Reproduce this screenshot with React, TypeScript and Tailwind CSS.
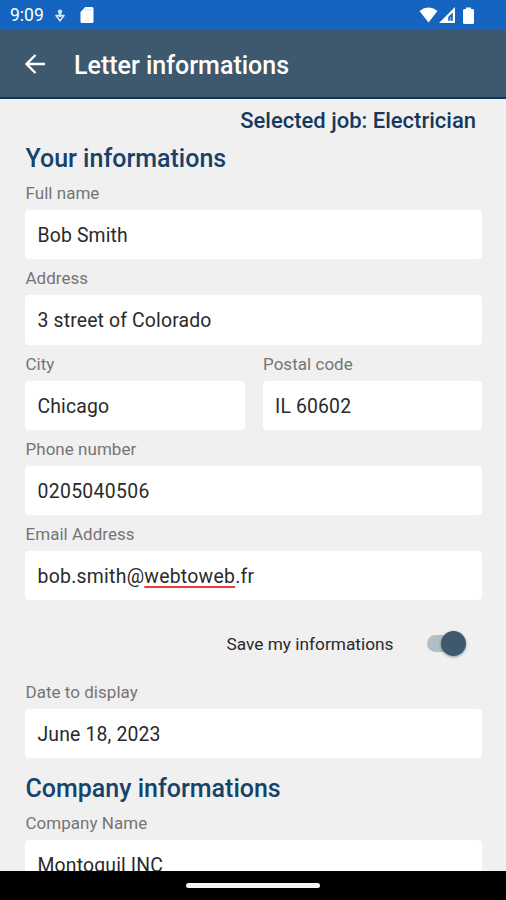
import React from 'react';

type FieldProps = {
  label: string;
  tracking?: string;
  children: React.ReactNode;
};

const Field = ({ label, tracking = 'tracking-[0.15px]', children }: FieldProps) => (
  <div className="flex-1 min-w-0">
    <div className="h-9 pt-[9px] pl-[0.5px]">
      <span className="block leading-5 text-[17px] text-[#757575] whitespace-nowrap tracking-[0.03px]">{label}</span>
    </div>
    <div className="h-[49.3px] rounded-[4px] bg-white px-[12.5px] flex items-center">
      <span className={`text-[19.4px] leading-6 pt-[3px] text-[#2a2a2a] whitespace-nowrap ${tracking}`}>
        {children}
      </span>
    </div>
  </div>
);

const StatusBar = () => (
  <div className="h-[30px] shrink-0 bg-[#1565c0] flex items-center text-white pl-[10px] pr-[32.5px]">
    <span className="text-[17.5px] leading-none pt-[2px] w-[45px]">9:09</span>
    <svg className="w-[10px] h-[14px] mt-px" viewBox="0 0 10 14">
      <circle cx="5" cy="2.6" r="2.2" fill="#cfe4fa" />
      <path d="M5 3v5" stroke="#cfe4fa" strokeWidth="2.4" />
      <path d="M1 6.600h8L5 11.800z" fill="none" stroke="#cfe4fa" strokeWidth="1.600" strokeLinejoin="round" />
    </svg>
    <svg className="w-[14px] h-4 ml-[15px]" viewBox="0 0 14 16">
      <path d="M5.300 0H12q1.500 0 1.500 1.500v13q0 1.500-1.500 1.500H2Q.5 16 .5 14.500V5z" fill="#fff" />
      <path d="M5.500 2v1.500M8 2v1.500M10.500 2v1.500" stroke="#a9cbee" strokeWidth="1" />
    </svg>
    <div className="flex-1" />
    <svg className="w-[19px] h-4" viewBox="0 0 19 16">
      <path d="M.5 4Q9.500-2.800 18.500 4L9.500 15.500z" fill="#fff" />
    </svg>
    <svg className="w-4 h-4 ml-px" viewBox="0 0 16 16">
      <path d="M0 16 16 0v16zM13.800 5.400 9.200 10v3.800h4.600z" fill="#fff" fillRule="evenodd" />
      <path d="M11.400 10v4" stroke="#8fb9e6" strokeWidth="1" />
    </svg>
    <svg className="w-[11px] h-[17px] ml-2" viewBox="0 0 11 17">
      <path d="M3 2V.5h5V2h1.500Q11 2 11 3.500v12q0 1.500-1.500 1.500h-8Q0 17 0 15.500v-12Q0 2 1.500 2z" fill="#fff" />
    </svg>
  </div>
);

export default function App() {
  return (
    <div className="w-full h-[900px] overflow-hidden flex flex-col bg-[#f0f0f0] font-['Roboto','Noto_Sans',sans-serif]">
      <StatusBar />

      {/* App bar */}
      <div className="h-[69px] shrink-0 bg-[#3e586e] border-b-2 border-[#0d3557] flex items-center pl-[25px]">
        <svg className="w-5 h-5 mr-[29px] mt-px" viewBox="0 0 20 20" fill="none" stroke="#fff" strokeWidth="2.400">
          <path d="M20 10H2M10.500 1 1.500 10l9 9" />
        </svg>
        <span className="text-[25px] leading-7 font-medium text-white whitespace-nowrap pt-[4px]">Letter informations</span>
      </div>

      {/* Form */}
      <div className="flex-1 min-h-0 overflow-hidden pl-[25px] pr-[24px]">
        <div className="h-[44px] flex justify-end pr-[6px] pt-[8px]">
          <span className="text-[22px] leading-7 font-medium text-[#17395c] whitespace-nowrap">Selected job: Electrician</span>
        </div>
        <h2 className="h-[31px] pl-[0.5px] text-[25px] leading-[32px] font-medium text-[#17436a] whitespace-nowrap">Your informations</h2>

        <Field label="Full name">Bob Smith</Field>
        <Field label="Address">3 street of Colorado</Field>
        <div className="flex gap-[18px]">
          <Field label="City">Chicago</Field>
          <Field label="Postal code">IL 60602</Field>
        </div>
        <Field label="Phone number" tracking="tracking-[0.32px]">0205040506</Field>
        <Field label="Email Address" tracking="tracking-[0.27px]">
          bob.smith@
          <span className="underline decoration-[#f03a3a] decoration-2 underline-offset-3 [text-decoration-skip-ink:none]">webtoweb</span>
          .fr
        </Field>

        <div className="h-[72.500px] flex items-center justify-end pt-[13px] pr-[16px]">
          <span className="text-[17.300px] leading-6 pt-px text-[#2a2a2a] whitespace-nowrap mr-[33.500px]">Save my informations</span>
          <div className="w-[39px] h-[25px] flex items-center relative">
            <div className="w-[34px] h-[17px] rounded-full bg-[#b2bfc7]" />
            <div className="absolute right-0 top-0 w-[25px] h-[25px] rounded-full bg-[#3e586e] shadow-[0_1px_3px_rgba(0,0,0,0.4)]" />
          </div>
        </div>

        <Field label="Date to display">June 18, 2023</Field>
        <h2 className="h-[46px] pt-[15px] pl-[0.5px] text-[25px] leading-[32px] font-medium text-[#17436a] whitespace-nowrap">Company informations</h2>
        <Field label="Company Name">Montoquil INC</Field>
      </div>

      {/* Navigation bar */}
      <div className="h-[29px] shrink-0 bg-black flex justify-center pt-[12px]">
        <div className="w-[134px] h-[5px] rounded-full bg-[#f4f4f4]" />
      </div>
    </div>
  );
}
